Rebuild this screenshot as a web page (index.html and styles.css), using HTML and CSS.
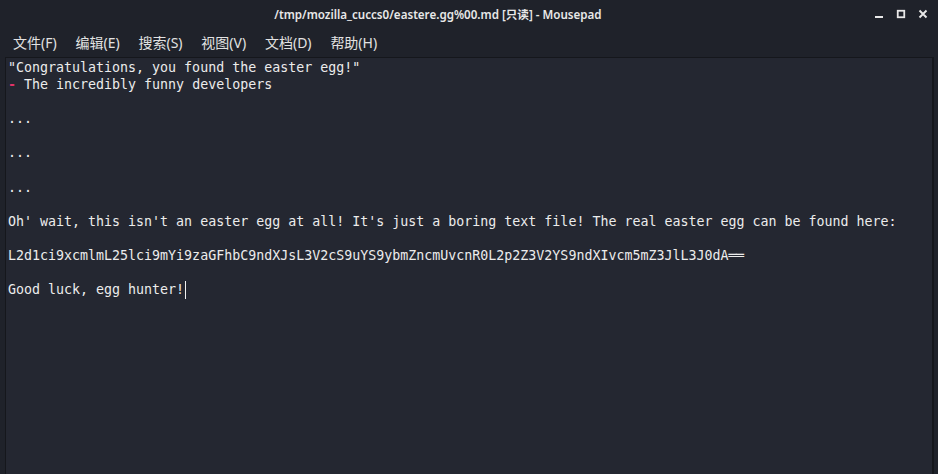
FILE: index.html
```html
<!DOCTYPE html>
<html>
<head>
<meta charset="utf-8">
<link rel="stylesheet" href="styles.css">
</head>
<body>
<div class="window">
  <div class="titlebar">
    <div class="title">/tmp/mozilla_cuccs0/eastere.gg%00.md [只读] - Mousepad</div>
    <div class="controls">
      <svg class="ctl" width="12" height="12" viewBox="0 0 12 12"><rect x="2" y="8" width="8" height="2" fill="#e8e8e8"/></svg>
      <svg class="ctl" width="12" height="12" viewBox="0 0 12 12"><rect x="2.75" y="2.75" width="6.5" height="6.5" fill="none" stroke="#e8e8e8" stroke-width="1.8"/></svg>
      <svg class="ctl" width="12" height="12" viewBox="0 0 12 12"><path d="M2.5 2.5 L9.5 9.5 M9.5 2.5 L2.5 9.5" stroke="#e8e8e8" stroke-width="1.9"/></svg>
    </div>
  </div>
  <div class="menubar">
    <span class="menu">文件(F)</span>
    <span class="menu">编辑(E)</span>
    <span class="menu">搜索(S)</span>
    <span class="menu">视图(V)</span>
    <span class="menu">文档(D)</span>
    <span class="menu">帮助(H)</span>
  </div>
  <div class="editor-wrap">
    <div class="editor">
      <div class="line">"Congratulations, you found the easter egg!"</div>
      <div class="line"><span class="mark">-</span> The incredibly funny developers</div>
      <div class="line"></div>
      <div class="line">...</div>
      <div class="line"></div>
      <div class="line">...</div>
      <div class="line"></div>
      <div class="line">...</div>
      <div class="line"></div>
      <div class="line">Oh' wait, this isn't an easter egg at all! It's just a boring text file! The real easter egg can be found here:</div>
      <div class="line"></div>
      <div class="line">L2d1ci9xcmlmL25lci9mYi9zaGFhbC9ndXJsL3V2cS9uYS9ybmZncmUvcnR0L2p2Z3V2YS9ndXIvcm5mZ3JlL3J0dA<span class="eq">══</span></div>
      <div class="line"></div>
      <div class="line">Good luck, egg hunter!<span class="cursor"></span></div>
    </div>
  </div>
</div>
</body>
</html>
```
FILE: styles.css
```css
html, body {
  margin: 0;
  padding: 0;
  background: #1f222a;
  width: 938px;
  height: 474px;
  overflow: hidden;
}
.window {
  display: flex;
  flex-direction: column;
  height: 474px;
  background: #1f222a;
  font-family: "Noto Sans", "Noto Sans CJK SC", sans-serif;
  color: #e6e6e6;
}
.titlebar {
  flex: 0 0 30px;
  position: relative;
  display: flex;
  align-items: center;
  justify-content: center;
  padding-right: 62px;
}
.title {
  font-size: 11.6px;
  font-weight: 600;
  color: #e8e8e8;
  margin-top: -2px;
}
.controls {
  position: absolute;
  right: 9px;
  top: 8px;
  display: flex;
  gap: 10px;
}
.ctl { display: block; }
.menubar {
  flex: 0 0 23px;
  padding-bottom: 4px;
  display: flex;
  align-items: center;
  padding-left: 4px;
  font-size: 14px;
  color: #e2e2e2;
}
.menu {
  padding: 0 9px;
  margin-right: 0.8px;
}
.editor-wrap {
  flex: 1 1 auto;
  min-height: 0;
  overflow: hidden;
  margin: 0 4px 0 5px;
  border-top: 1px solid #15171c;
  border-left: 1px solid #15171c;
  border-right: 2px solid #15171c;
  background: #242731;
  padding-left: 2px;
  padding-top: 1px;
}
.editor {
  font-family: "DejaVu Sans Mono", monospace;
  font-size: 13.3px;
  line-height: 17px;
  color: #ececec;
}
.line {
  height: 17.1px;
  white-space: pre;
}
.mark { color: #e0336a; font-weight: bold; }
.eq { letter-spacing: -0.5px; }
.cursor {
  display: inline-block;
  width: 1px;
  height: 18px;
  background: #f0f0f0;
  vertical-align: top;
  margin-left: 1px;
}
```
